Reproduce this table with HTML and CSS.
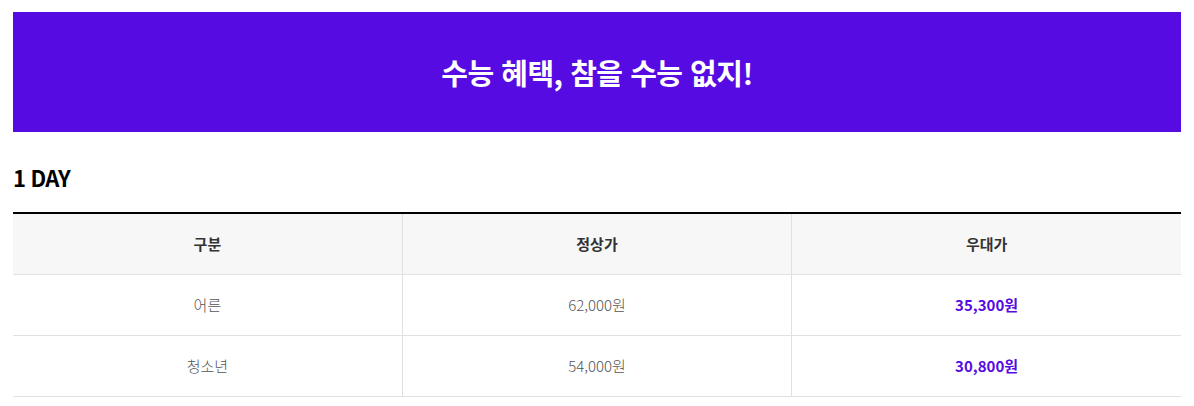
FILE: index.html
```html
<!DOCTYPE html>
<html lang="ko">
<head>
<meta charset="utf-8">
<link rel="stylesheet" href="styles.css">
</head>
<body>
<div class="page">
  <div class="banner"><h1 class="banner-title">수능 혜택, 참을 수능 없지!</h1></div>
  <h2 class="section-title">1 DAY</h2>
  <table class="price-table">
    <thead>
      <tr><th>구분</th><th>정상가</th><th>우대가</th></tr>
    </thead>
    <tbody>
      <tr><td>어른</td><td>62,000원</td><td class="sale">35,300원</td></tr>
      <tr><td>청소년</td><td>54,000원</td><td class="sale">30,800원</td></tr>
    </tbody>
  </table>
</div>
</body>
</html>
```
FILE: styles.css
```css
* { box-sizing: border-box; }
body {
  margin: 0;
  background: #fff;
  font-family: "Noto Sans CJK KR", "Noto Sans", sans-serif;
}
.page {
  padding: 12px 13px 0 13px;
}
.banner {
  height: 120px;
  background: #560be2;
  display: flex;
  align-items: center;
  justify-content: center;
}
.banner-title {
  margin: 0;
  color: #fff;
  font-size: 29px;
  font-weight: 700;
  letter-spacing: -0.5px;
  line-height: 1;
}
.section-title {
  margin: 30px 0 20px 0;
  font-size: 22px;
  font-weight: 700;
  color: #000;
  line-height: 30px;
  letter-spacing: -0.8px;
}
.price-table {
  width: 100%;
  border-collapse: collapse;
  table-layout: fixed;
  border-top: 2px solid #000;
}
.price-table th,
.price-table td {
  height: 61px;
  text-align: center;
  vertical-align: middle;
  font-size: 15px;
  border-bottom: 1px solid #e1e1e1;
  border-left: 1px solid #e1e1e1;
  padding: 0;
}
.price-table th:first-child,
.price-table td:first-child { border-left: none; }
.price-table th {
  background: #f7f7f7;
  color: #333;
  font-weight: 700;
}
.price-table td {
  color: #555;
  font-weight: 300;
}
.price-table td.sale {
  color: #560be2;
  font-weight: 700;
}
```
